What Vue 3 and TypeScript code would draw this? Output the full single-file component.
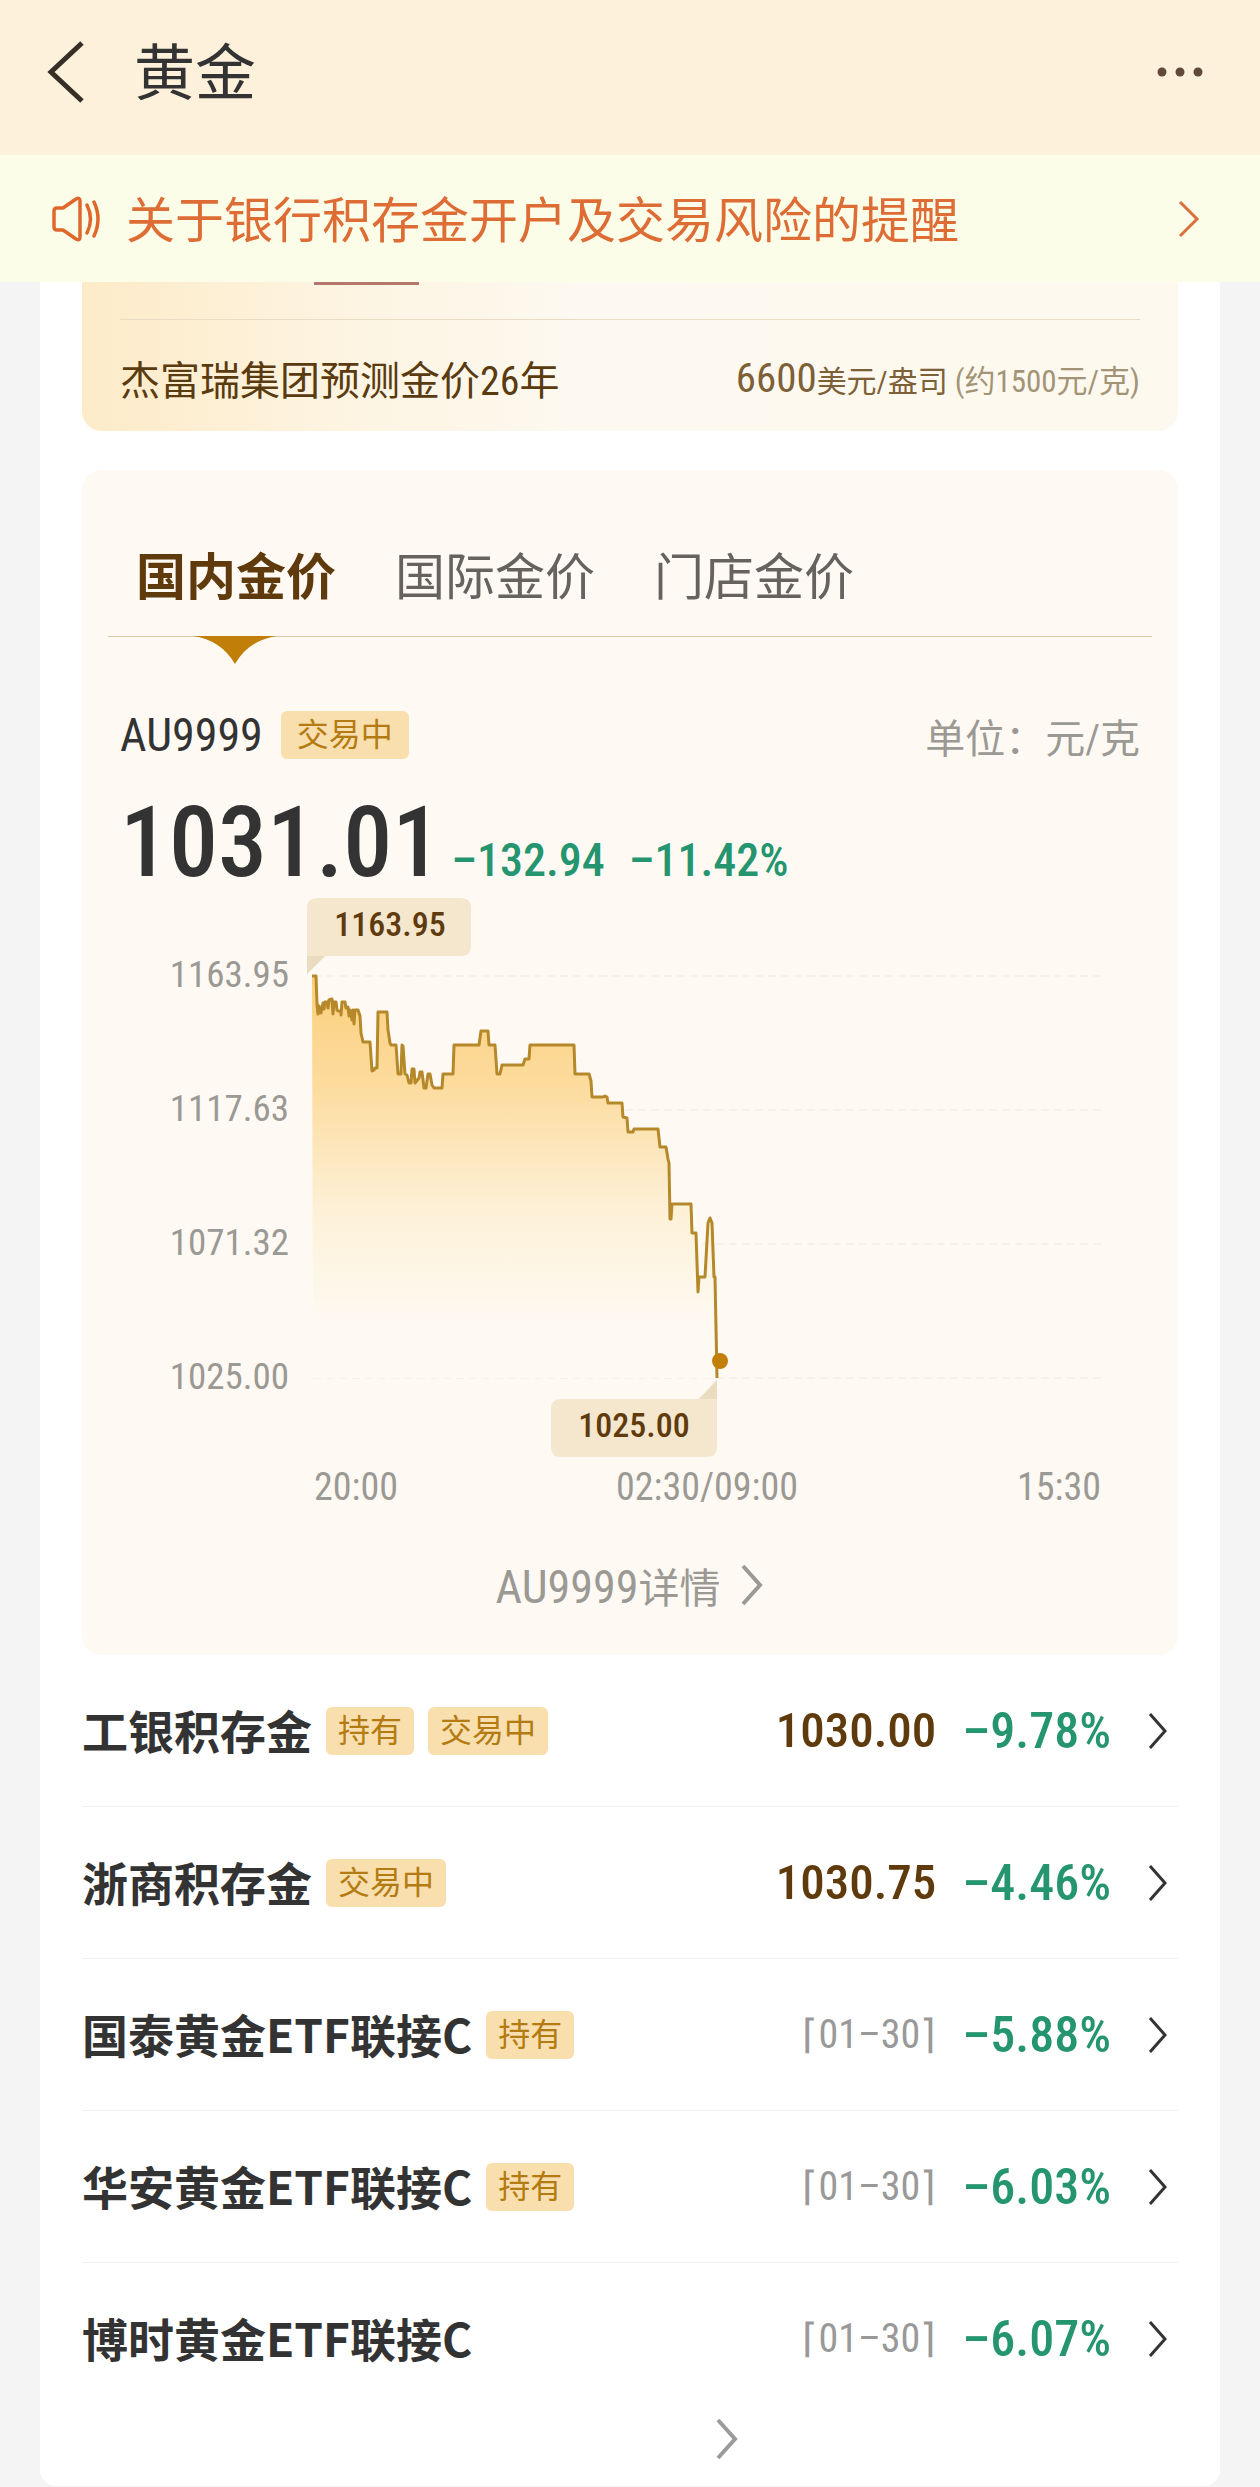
<script setup lang="ts">
import { ref } from 'vue'

interface Product {
  name: string
  tags: string[]
  price?: string
  date?: string
  change: string
}

const tabs = ['国内金价', '国际金价', '门店金价']
const activeTab = ref(0)

const products: Product[] = [
  { name: '工银积存金', tags: ['持有', '交易中'], price: '1030.00', change: '–9.78%' },
  { name: '浙商积存金', tags: ['交易中'], price: '1030.75', change: '–4.46%' },
  { name: '国泰黄金ETF联接C', tags: ['持有'], date: '⌈01–30⌉', change: '–5.88%' },
  { name: '华安黄金ETF联接C', tags: ['持有'], date: '⌈01–30⌉', change: '–6.03%' },
  { name: '博时黄金ETF联接C', tags: [], date: '⌈01–30⌉', change: '–6.07%' },
]

const gridLines = [
  { y: 86, label: '1163.95' },
  { y: 220, label: '1117.63' },
  { y: 354, label: '1071.32' },
  { y: 488, label: '1025.00' },
]

// Intraday price trace, in chart units
const trace: [number, number][] = [
  [230, 86], [234, 86], [235, 114], [236, 124], [237, 116], [239, 123], [241, 113], [242, 119], [243, 112],
  [245, 112], [246, 118], [247, 110], [250, 109], [251, 124], [252, 112], [254, 112], [255, 120], [256, 121],
  [259, 121], [259, 125], [260, 112], [263, 112], [264, 118], [266, 117], [267, 126], [268, 120], [270, 130],
  [271, 120], [272, 134], [273, 120], [276, 120], [278, 126], [279, 143], [281, 152], [288, 152], [290, 181],
  [292, 180], [293, 178], [295, 178], [296, 122], [305, 122], [306, 140], [308, 153], [309, 155], [314, 155],
  [316, 184], [319, 184], [320, 155], [321, 156], [323, 184], [325, 185], [327, 193], [329, 193], [330, 179],
  [332, 179], [333, 193], [337, 188], [338, 182], [340, 182], [342, 198], [344, 198], [346, 184], [348, 184],
  [350, 195], [352, 198], [360, 198], [361, 184], [371, 184], [372, 155], [397, 155], [399, 141], [406, 141],
  [407, 155], [413, 155], [415, 184], [418, 184], [420, 175], [441, 175], [443, 169], [447, 169], [448, 155],
  [492, 155], [493, 184], [507, 184], [509, 191], [510, 207], [521, 207], [523, 206], [525, 207], [526, 213],
  [540, 213], [541, 227], [545, 228], [546, 242], [551, 242], [552, 239], [576, 239], [578, 257], [584, 257],
  [586, 269], [587, 273], [588, 329], [589, 329], [590, 314], [609, 314], [610, 343], [614, 343], [616, 402],
  [617, 387], [623, 387], [626, 333], [628, 328], [630, 333], [632, 387], [633, 387], [635, 488],
]
const linePath = 'M' + trace.map((p) => p.join(' ')).join('L')
const areaPath = linePath + 'L231 488Z'
</script>

<template>
  <div class="page">
    <header class="topbar">
      <button class="icon-btn" type="button" aria-label="返回">
        <svg width="40" height="64" viewBox="0 0 40 64"><path d="M36 3 5 32 36 61" fill="none" stroke="#352f26" stroke-width="5" /></svg>
      </button>
      <h1>黄金</h1>
      <button class="icon-btn more" type="button" aria-label="更多">
        <svg width="48" height="12" viewBox="0 0 48 12" fill="#5f493a"><circle cx="6" cy="6" r="4.5" /><circle cx="24" cy="6" r="4.5" /><circle cx="42" cy="6" r="4.5" /></svg>
      </button>
    </header>

    <a class="notice" href="#">
      <svg width="50" height="48" viewBox="0 0 50 48" fill="none" stroke="#e0672c" stroke-width="3.5" stroke-linejoin="round" stroke-linecap="round">
        <path d="M4 16q0-3 3-3h6L26 4q4-2 4 2v36q0 4-4 2l-13-9H7q-3 0-3-3z" />
        <path d="M37 10q7 14 0 28M44 7q8 17 0 34" />
      </svg>
      <span>关于银行积存金开户及交易风险的提醒</span>
      <svg class="end" width="22" height="38" viewBox="0 0 22 38"><path d="M2 2 19 19 2 36" fill="none" stroke="#d9703d" stroke-width="3" /></svg>
    </a>

    <main class="panel">
      <section class="forecast">
        <div class="forecast-head"><i></i></div>
        <div class="forecast-row">
          <span class="who">杰富瑞集团预测金价26年</span>
          <span class="target"><b>6600</b>美元/盎司 <small>(约1500元/克)</small></span>
        </div>
      </section>

      <section class="quote">
        <nav class="tabs">
          <button v-for="(t, i) in tabs" :key="t" type="button" :class="{ active: i === activeTab }" @click="activeTab = i">
            {{ t }}
            <svg v-if="i === activeTab" class="notch" width="84" height="28" viewBox="0 0 84 28"><path d="M0 0H84Q56 4 42 28 28 4 0 0Z" fill="#c17f0a" /></svg>
          </button>
        </nav>

        <div class="symbol-row">
          <div class="symbol"><span>AU9999</span><em class="tag wide">交易中</em></div>
          <span class="unit">单位：元/克</span>
        </div>
        <div class="price-row">
          <strong>1031.01</strong>
          <span>–132.94</span>
          <span>–11.42%</span>
        </div>

        <svg class="chart" viewBox="0 0 1096 620" role="img" aria-label="AU9999">
          <defs>
            <linearGradient id="fill" gradientUnits="userSpaceOnUse" x1="0" y1="86" x2="0" y2="440">
              <stop offset="0" stop-color="#fbcf7c" />
              <stop offset="0.3" stop-color="#fcdb9c" />
              <stop offset="0.65" stop-color="#fdf0d6" />
              <stop offset="1" stop-color="#fefaf3" />
            </linearGradient>
          </defs>
          <g v-for="g in gridLines" :key="g.y">
            <line x1="231" x2="1022" :y1="g.y" :y2="g.y" stroke="#f6f2ea" stroke-width="2" stroke-dasharray="8 5" />
            <text class="axis" x="207" :y="g.y + 11" text-anchor="end">{{ g.label }}</text>
          </g>
          <path :d="areaPath" fill="url(#fill)" />
          <path :d="linePath" fill="none" stroke="#b5882a" stroke-width="3" stroke-linejoin="round" />
          <circle cx="638" cy="471" r="8" fill="#c17f0a" />

          <path d="M225 84V18q0-10 10-10H379q10 0 10 10V56q0 10-10 10H243Z" fill="#f4e7cd" />
          <path d="M225 84V66H243Z" fill="#e9dcc0" />
          <text class="tip" x="308" y="46" text-anchor="middle">1163.95</text>
          <path d="M635 490V557q0 10-10 10H479q-10 0-10-10V519q0-10 10-10H617Z" fill="#f4e7cd" />
          <path d="M635 490V509H617Z" fill="#e9dcc0" />
          <text class="tip" x="552" y="547" text-anchor="middle">1025.00</text>

          <text class="axis time" x="232" y="610">20:00</text>
          <text class="axis time" x="625" y="610" text-anchor="middle">02:30/09:00</text>
          <text class="axis time" x="1019" y="610" text-anchor="end">15:30</text>
        </svg>

        <a class="detail" href="#">
          <span><b>AU9999</b>详情</span>
          <svg width="24" height="42" viewBox="0 0 24 42"><path d="M3 2 20 21 3 40" fill="none" stroke="#9b9993" stroke-width="4" /></svg>
        </a>
      </section>

      <ul class="list">
        <li v-for="p in products" :key="p.name">
          <a href="#">
            <span class="name">{{ p.name }}</span>
            <em v-for="t in p.tags" :key="t" class="tag">{{ t }}</em>
            <span v-if="p.price" class="price">{{ p.price }}</span>
            <span v-else class="date">{{ p.date }}</span>
            <span class="change">{{ p.change }}</span>
            <svg width="20" height="38" viewBox="0 0 20 38"><path d="M2 2 17 19 2 36" fill="none" stroke="#333" stroke-width="3" /></svg>
          </a>
        </li>
      </ul>

      <a class="more-link" href="#" aria-label="更多">
        <svg width="24" height="42" viewBox="0 0 24 42"><path d="M3 2 20 21 3 40" fill="none" stroke="#9b9b9b" stroke-width="4" /></svg>
      </a>
    </main>
  </div>
</template>

<style>
body {
  margin: 0;
  background: #f4f4f5;
}
</style>

<style scoped>
.page {
  font-family: 'Roboto Condensed', 'Noto Sans CJK SC', sans-serif;
  color: #333;
}
a {
  color: inherit;
  text-decoration: none;
}
button {
  padding: 0;
  border: 0;
  background: none;
  font: inherit;
  color: inherit;
}
svg {
  display: block;
  flex: none;
}
.topbar {
  display: flex;
  align-items: center;
  height: 144px;
  padding: 0 56px 11px 46px;
  background: #fdf1dc;
}
.topbar h1 {
  margin: 0 0 0 48px;
  padding-top: 4px;
  font-size: 61px;
  line-height: 80px;
  font-weight: 400;
}
.more {
  margin-left: auto;
}
.notice {
  display: flex;
  align-items: center;
  height: 127px;
  padding: 0 60px 0 50px;
  background: #fcfde8;
  color: #dd6c35;
  font-size: 49px;
  line-height: 60px;
}
.notice span {
  margin-left: 26px;
  padding-top: 6px;
}
.end {
  margin-left: auto;
}
.panel {
  margin: 0 40px;
  padding: 0 42px 16px;
  background: #fff;
  border-radius: 0 0 16px 16px;
}
.forecast {
  padding: 0 38px;
  border-radius: 0 0 20px 20px;
  background: linear-gradient(90deg, #fdebc8 0, #fdf4e2 25%, #fdf9f0 45%, #fdf9ee 100%);
}
.forecast-head {
  height: 37px;
  border-bottom: 1px solid #e8dcc4;
}
.forecast-head i {
  display: block;
  width: 105px;
  height: 3px;
  margin-left: 194px;
  background: #b5776c;
}
.forecast-row {
  display: flex;
  align-items: center;
  justify-content: space-between;
  height: 106px;
  padding-top: 5px;
}
.who {
  font-size: 40px;
  color: #5a3a0f;
}
.target {
  font-size: 30px;
  color: #7d6038;
}
.target b {
  font-size: 41px;
  font-weight: 400;
}
.target small {
  font-size: 31px;
  color: #a39477;
}
.quote {
  margin-top: 39px;
  padding: 58px 0 40px;
  border-radius: 20px;
  background: #fefaf3;
}
.tabs {
  display: flex;
  gap: 59px;
  margin: 0 26px;
  padding: 0 28px 8px;
  border-bottom: 1px solid #d8c9a4;
}
.tabs button {
  position: relative;
  font-size: 50px;
  line-height: 100px;
  color: #66635e;
}
.tabs .active {
  font-weight: 700;
  color: #5f3a0c;
}
.notch {
  position: absolute;
  left: 57px;
  top: 108px;
}
.symbol-row {
  display: flex;
  height: 53px;
  margin: 74px 38px 0;
}
.symbol {
  display: flex;
  align-items: center;
  gap: 18px;
  height: 48px;
  font-size: 46px;
}
.tag {
  padding: 0 12px;
  border-radius: 6px;
  background: #f9dfae;
  font-size: 32px;
  line-height: 48px;
  font-style: normal;
  color: #b37b12;
}
.tag.wide {
  padding: 0 16px;
}
.unit {
  align-self: flex-end;
  margin-left: auto;
  font-size: 40px;
  line-height: 48px;
  color: #9b9993;
}
.price-row {
  display: flex;
  align-items: baseline;
  height: 110px;
  padding-top: 16px;
  margin: 0 38px;
  font-size: 46px;
  line-height: 126px;
  font-weight: 500;
  color: #25956f;
}
.price-row strong {
  font-size: 98px;
  font-weight: 500;
  color: #333;
}
.price-row span {
  margin-left: 10px;
}
.price-row span + span {
  margin-left: 24px;
}
.chart {
  width: 100%;
}
.axis {
  font-size: 37px;
  fill: #9b9993;
}
.axis.time {
  font-size: 38px;
}
.tip {
  font-size: 34px;
  font-weight: 500;
  fill: #5f3a0c;
}
.detail {
  display: flex;
  align-items: center;
  justify-content: center;
  gap: 20px;
  height: 60px;
  margin-top: 45px;
  font-size: 41px;
  color: #9b9993;
}
.detail b {
  font-size: 46px;
  font-weight: 400;
}
.list {
  margin: 0;
  padding: 0;
  list-style: none;
}
.list li + li {
  border-top: 1px solid #eee;
}
.list a {
  display: flex;
  align-items: center;
  height: 151px;
  padding-right: 10px;
}
.name {
  padding-bottom: 4px;
  font-family: 'Noto Sans CJK SC', sans-serif;
  font-size: 46px;
  line-height: 60px;
  font-weight: 700;
}
.list .tag {
  margin-left: 14px;
}
.price,
.date {
  margin-left: auto;
  font-size: 49px;
  font-weight: 500;
  color: #5f3a0c;
}
.date {
  font-size: 40px;
  font-weight: 400;
  color: #999;
}
.change {
  margin: 0 37px 0 26px;
  font-size: 50px;
  font-weight: 500;
  color: #25956f;
}
.more-link {
  display: flex;
  justify-content: center;
  margin: 4px 0 10px 194px;
}
</style>
